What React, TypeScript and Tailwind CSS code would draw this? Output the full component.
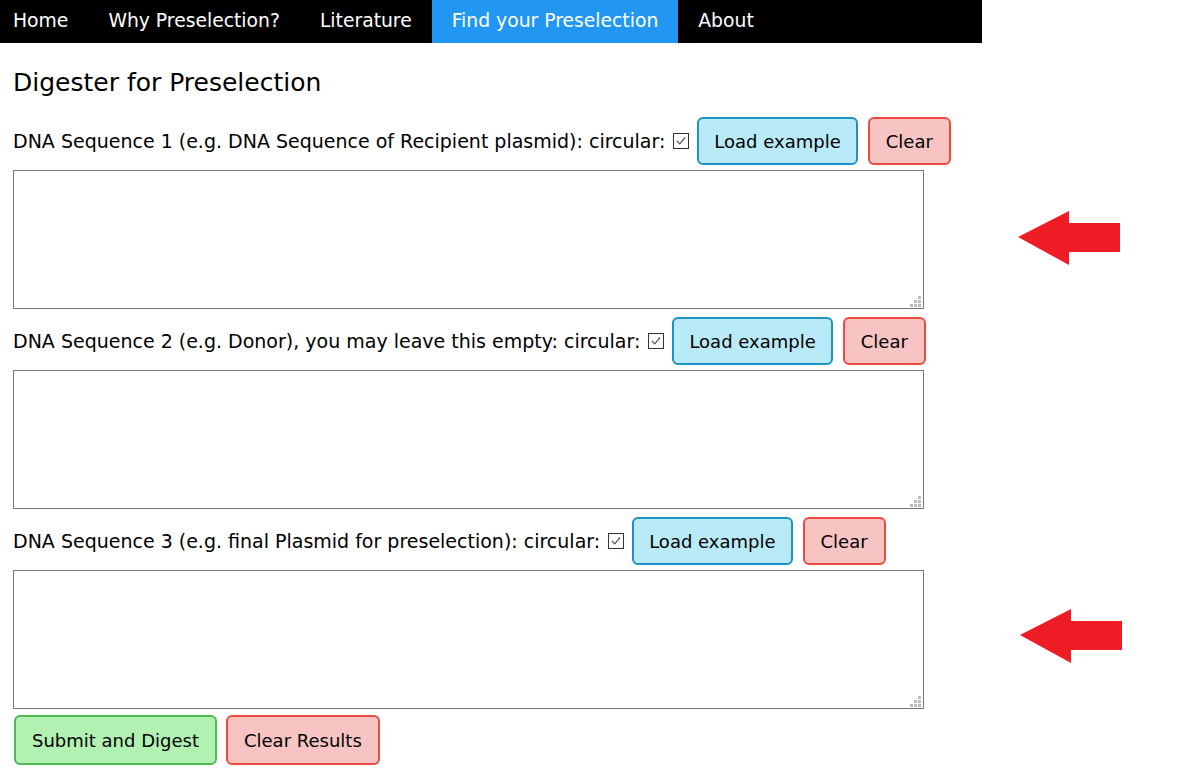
const navItems = ["Home", "Why Preselection?", "Literature", "Find your Preselection", "About"];

const CheckBox = (): JSX.Element => (
  <span className="inline-flex items-center justify-center w-[16px] h-[16px] border border-[#333] bg-white mx-2">
    <svg width="12" height="12" viewBox="0 0 12 12">
      <path d="M2 6 L4.8 8.8 L10 2.5" fill="none" stroke="#555" strokeWidth="1.2" />
    </svg>
  </span>
);

const Grip = (): JSX.Element => (
  <svg className="absolute right-[3px] bottom-[2px]" width="11" height="11" viewBox="0 0 11 11">
    <rect x="8" y="0" width="3" height="3" fill="#bcbcbc" />
    <rect x="4" y="4" width="3" height="3" fill="#bcbcbc" />
    <rect x="8" y="4" width="3" height="3" fill="#bcbcbc" />
    <rect x="0" y="8" width="3" height="3" fill="#bcbcbc" />
    <rect x="4" y="8" width="3" height="3" fill="#bcbcbc" />
    <rect x="8" y="8" width="3" height="3" fill="#bcbcbc" />
  </svg>
);

const SeqBlock = ({ label }: { label: string }): JSX.Element => (
  <div>
    <div className="flex items-center h-[48px]">
      <span className="text-[19px]">{label}</span>
      <CheckBox />
      <button className="h-[48px] px-[15px] rounded-md border-2 border-[#1c93c4] bg-[#b8eaf7] text-black">Load example</button>
      <button className="h-[48px] px-[16px] ml-[10px] rounded-md border-2 border-[#ee4b3f] bg-[#f7c4c3] text-black">Clear</button>
    </div>
    <div className="relative mt-[5px] w-[911px] h-[139px]">
      <textarea className="block w-full h-full border border-[#767676] bg-white resize-none" />
      <Grip />
    </div>
  </div>
);

const Arrow = ({ className }: { className: string }): JSX.Element => (
  <svg className={className} width="104" height="56" viewBox="0 0 104 56">
    <path d="M1 27 L52 1 L52 13 L103 13 L103 42 L52 42 L52 55 Z" fill="#ee1c25" />
  </svg>
);

export default function App(): JSX.Element {
  return (
    <div className="relative min-h-[772px] bg-white text-black text-[18px]" style={{ fontFamily: '"DejaVu Sans", Verdana, sans-serif' }}>
      <nav className="flex w-[982px] h-[43px] bg-black text-[18.75px]">
        {navItems.map((item, i) => (
          <div
            key={item}
            className={`flex items-center h-full ${i === 0 ? "pl-[13px] pr-[20px]" : "px-[20px]"} ${item === "Find your Preselection" ? "bg-[#2196f3]" : ""} text-white`}
          >
            {item}
          </div>
        ))}
      </nav>
      <div className="pl-[13px]">
        <h2 className="text-[25px] mt-[24px] mb-[18px] leading-[32px]">Digester for Preselection</h2>
        <div className="flex flex-col gap-[8px]">
          <SeqBlock label="DNA Sequence 1 (e.g. DNA Sequence of Recipient plasmid): circular:" />
          <SeqBlock label="DNA Sequence 2 (e.g. Donor), you may leave this empty: circular:" />
          <SeqBlock label="DNA Sequence 3 (e.g. final Plasmid for preselection): circular:" />
        </div>
        <div className="flex gap-[9px] mt-[6px] pl-[1px]">
          <button className="h-[50px] px-[16px] rounded-md border-2 border-[#4cba4f] bg-[#b1f2b3] text-black">Submit and Digest</button>
          <button className="h-[50px] px-[16px] rounded-md border-2 border-[#ee4b3f] bg-[#f7c4c3] text-black">Clear Results</button>
        </div>
      </div>
      <Arrow className="absolute left-[1017px] top-[210px]" />
      <Arrow className="absolute left-[1019px] top-[608px]" />
    </div>
  );
}
